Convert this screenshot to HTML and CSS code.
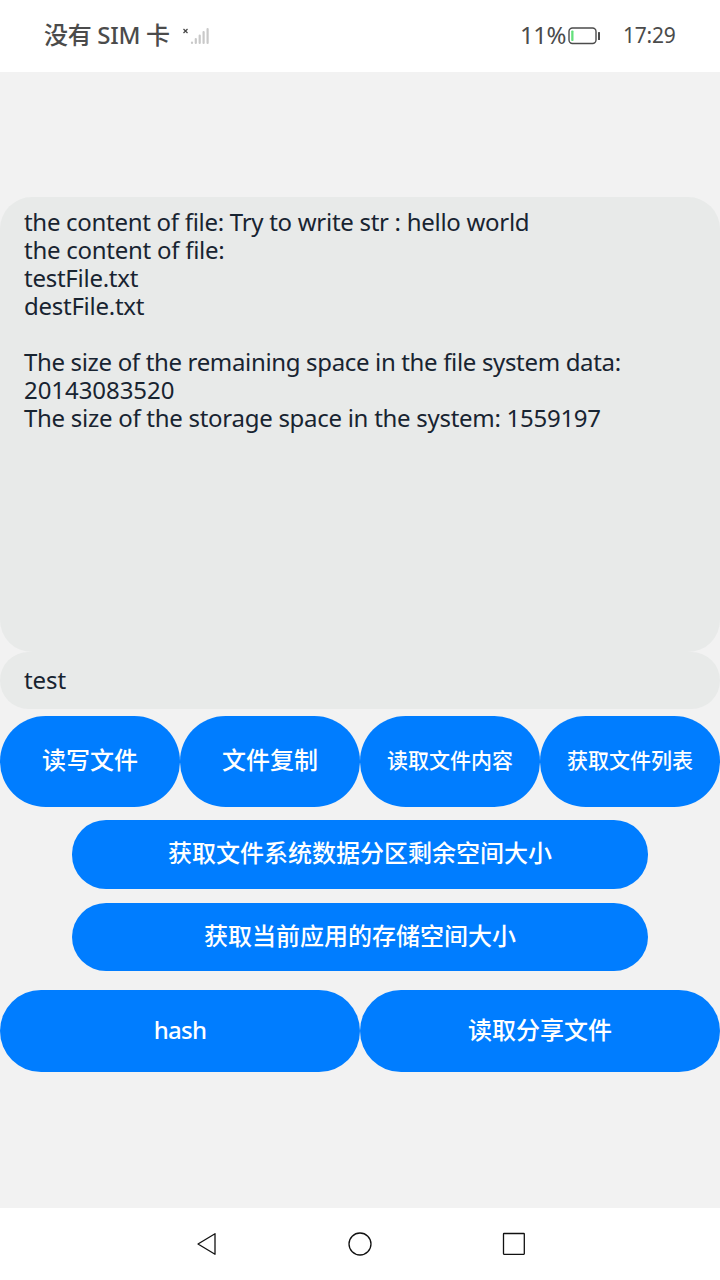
FILE: index.html
```html
<!DOCTYPE html>
<html lang="zh-CN">
<head>
<meta charset="utf-8">
<title>File manager</title>
<link rel="stylesheet" href="styles.css">
</head>
<body>
<div class="screen">
  <header class="status">
    <span class="carrier">没有 SIM 卡</span>
    <svg class="signal" width="28" height="20" viewBox="0 0 28 20">
      <path d="M2.500 3l4 4M6.500 3l-4 4" stroke="#444" stroke-width="1.2"/>
      <path d="M11 16.500v.5M14.800 13v4M18.700 9.500v7.500M22.600 6v11M26.600 3v14" stroke="#c9c9c9" stroke-width="2.200" stroke-linecap="round"/>
    </svg>
    <span class="percent">11%</span>
    <svg class="battery" width="33" height="18" viewBox="0 0 33 18">
      <rect x="1" y="1" width="27" height="15.500" rx="3.500" fill="none" stroke="#4b4b4b" stroke-width="1.400"/>
      <rect x="3.200" y="3.500" width="2.300" height="10.500" rx=".8" fill="#64e07c"/>
      <rect x="30" y="5" width="2" height="8" rx=".5" fill="#4b4b4b"/>
    </svg>
    <span class="time">17:29</span>
  </header>
  <main class="app">
    <div class="output">
      <p class="line l1">the content of file: Try to write str : hello world</p>
      <p class="line l2">the content of file:</p>
      <p class="line l3">testFile.txt</p>
      <p class="line l4">destFile.txt</p>
      <p class="line"></p>
      <p class="line l5">The size of the remaining space in the file system data:</p>
      <p class="line l6">20143083520</p>
      <p class="line l7">The size of the storage space in the system: 1559197</p>
    </div>
    <div class="field"><span class="line l8">test</span></div>
    <div class="row four">
      <button class="btn">读写文件</button>
      <button class="btn">文件复制</button>
      <button class="btn small">读取文件内容</button>
      <button class="btn small">获取文件列表</button>
    </div>
    <button class="btn wide first">获取文件系统数据分区剩余空间大小</button>
    <button class="btn wide second">获取当前应用的存储空间大小</button>
    <div class="row two">
      <button class="btn hash">hash</button>
      <button class="btn">读取分享文件</button>
    </div>
  </main>
  <nav class="nav">
    <svg width="26" height="26" viewBox="0 0 26 26"><path d="M5 13L22 2.700V23.300Z"/></svg>
    <svg width="26" height="26" viewBox="0 0 26 26"><circle cx="13" cy="13" r="11"/></svg>
    <svg width="26" height="26" viewBox="0 0 26 26"><rect x="2.500" y="2.500" width="20.800" height="20.800" rx=".5"/></svg>
  </nav>
</div>
</body>
</html>
```
FILE: styles.css
```css
* { box-sizing: border-box; }
body {
  margin: 0;
  font-family: "Noto Sans", "Noto Sans CJK SC", sans-serif;
}
.screen {
  width: 720px;
  height: 1280px;
  display: flex;
  flex-direction: column;
  background: #f2f2f2;
}
.status {
  height: 72px;
  display: flex;
  align-items: center;
  padding: 0 44px 0 44px;
  background: #fff;
  color: #4b4b4b;
  font-size: 24px;
  line-height: 32px;
  white-space: nowrap;
}
.carrier { width: 126px; padding-bottom: 2px; font-weight: 500; letter-spacing: -.3px; }
.signal { margin-left: 11px; }
.percent { margin-left: auto; width: 47px; padding-bottom: 2px; letter-spacing: -.5px; }
.battery { flex: none; margin-left: 1px; }
.time { width: 53px; margin-left: 22px; padding-bottom: 2px; font-size: 21px; letter-spacing: -.2px; }
.app {
  flex: 1;
  padding-top: 125px;
  display: flex;
  flex-direction: column;
  align-items: center;
}
.output {
  width: 720px;
  height: 455px;
  padding: 11px 24px;
  border-radius: 32px;
  background: #e8eae9;
}
.line {
  height: 28px;
  margin: 0;
  font-size: 24px;
  line-height: 28px;
  color: #182431;
  white-space: nowrap;
}
.l1 { letter-spacing: -.29px; }
.l2, .l3, .l4 { letter-spacing: -.26px; }
.l5 { letter-spacing: -.34px; }
.l6 { letter-spacing: -.06px; }
.l7 { letter-spacing: -.28px; }
.l8 { letter-spacing: -.1px; }
.field {
  width: 720px;
  height: 57px;
  padding: 14px 24px;
  border-radius: 29px;
  background: #e8eae9;
  display: flex;
}
.row { width: 720px; display: flex; }
.row .btn { flex: 1; }
.four { height: 91px; margin-top: 7px; }
.two { height: 82px; margin-top: 19px; }
.btn {
  border: 0;
  padding: 0 0 3px;
  border-radius: 46px;
  background: #007dff;
  color: #fff;
  font: 500 24px/32px "Noto Sans", "Noto Sans CJK SC", sans-serif;
  white-space: nowrap;
}
.small { font-size: 21px; }
.two .btn { border-radius: 41px; padding-bottom: 2px; }
.hash { letter-spacing: -.7px; }
.wide { width: 576px; border-radius: 34px; }
.first { height: 69px; margin-top: 13px; }
.second { height: 68px; margin-top: 14px; }
.nav {
  height: 72px;
  display: flex;
  justify-content: center;
  align-items: center;
  gap: 128px;
  background: #fff;
}
.nav svg { fill: none; stroke: #111; stroke-width: 1.3; stroke-linejoin: round; }
```
